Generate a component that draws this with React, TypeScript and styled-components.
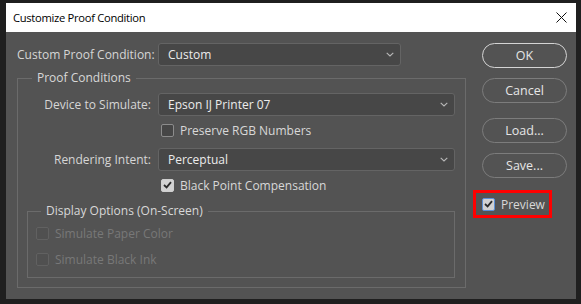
import React from "react";
import styled, { createGlobalStyle } from "styled-components";

const GlobalStyle = createGlobalStyle`
  html, body {
    margin: 0;
    padding: 0;
    background: #1f1f1f;
  }
  body {
    font-family: "Open Sans", "Noto Sans", sans-serif;
  }
`;

const Window = styled.div`
  width: 581px;
  height: 304px;
  box-sizing: border-box;
  padding: 3px 5px 5px 6px;
  background: #1f1f1f;
  display: flex;
  flex-direction: column;
`;

const TitleBar = styled.div`
  height: 29px;
  flex: none;
  background: #ffffff;
  display: flex;
  align-items: center;
  justify-content: space-between;
  padding: 0 9px 0 7px;
`;

const Title = styled.span`
  font-size: 11.2px;
  letter-spacing: -0.3px;
  color: #000;
`;

const CloseIcon = () => (
  <svg width="11" height="11" viewBox="0 0 11 11">
    <path d="M0.5 0.5 L10.5 10.5 M10.5 0.5 L0.5 10.5" stroke="#111" strokeWidth="1" fill="none" />
  </svg>
);

const Body = styled.div`
  flex: 1;
  background: #535353;
  display: flex;
  padding: 11px 9px 0 11px;
  gap: 16px;
  color: #d6d6d6;
  font-size: 12px;
`;

const Main = styled.div`
  width: 449px;
  display: flex;
  flex-direction: column;
  gap: 4px;
`;

const TopRow = styled.div`
  display: flex;
  align-items: center;
  gap: 7px;
`;

const Label = styled.span<{ $width?: number }>`
  width: ${(p) => p.$width ?? 133}px;
  text-align: right;
  white-space: nowrap;
`;

const SelectBox = styled.div<{ $width?: number }>`
  height: 23px;
  box-sizing: border-box;
  width: ${(p) => (p.$width ? `${p.$width}px` : "auto")};
  border: 1px solid #646464;
  border-radius: 3px;
  background: #474747;
  color: #ececec;
  display: flex;
  align-items: center;
  justify-content: space-between;
  padding: 0 6px 0 9px;
`;

const Chevron = () => (
  <svg width="8" height="5" viewBox="0 0 8 5">
    <path d="M0.7 0.8 L4 4 L7.3 0.8" stroke="#b8b8b8" strokeWidth="1.1" fill="none" />
  </svg>
);

const Select = ({ value, width }: { value: string; width?: number }) => (
  <SelectBox $width={width}>
    <span>{value}</span>
    <Chevron />
  </SelectBox>
);

const Group = styled.fieldset`
  margin: 0;
  padding: 0;
  border: 1px solid #6b6b6b;
  min-width: 0;
`;

const Legend = styled.legend<{ $offset: number }>`
  margin-left: ${(p) => p.$offset}px;
  padding: 0 5px;
  line-height: 16px;
  color: #d8d8d8;
`;

const FormGrid = styled.div`
  display: grid;
  grid-template-columns: 133px 1fr;
  column-gap: 7px;
  align-items: center;
  padding: 7px 10px 9px 0;
`;

const Spacer = styled.div<{ $h: number }>`
  grid-column: 1 / -1;
  height: ${(p) => p.$h}px;
`;

const CheckRow = styled.label<{ $disabled?: boolean; $indent?: number }>`
  display: flex;
  align-items: center;
  gap: 6px;
  height: 14px;
  margin-left: ${(p) => p.$indent ?? 0}px;
  color: ${(p) => (p.$disabled ? "#787878" : "#d8d8d8")};
  white-space: nowrap;
`;

const Box = styled.span<{ $checked?: boolean; $focus?: boolean; $disabled?: boolean }>`
  width: 13px;
  height: 13px;
  box-sizing: border-box;
  border-radius: 2px;
  flex: none;
  display: flex;
  align-items: center;
  justify-content: center;
  border: 1px solid
    ${(p) => (p.$disabled ? "#616161" : p.$focus ? "#5b8fd6" : p.$checked ? "#cfcfcf" : "#8c8c8c")};
  background: ${(p) => (p.$disabled ? "#505050" : p.$checked ? "#d2d2d2" : "#464646")};
`;

const CheckMark = () => (
  <svg width="9" height="8" viewBox="0 0 9 8">
    <path d="M1 4 L3.6 6.4 L8 1.2" stroke="#2a2a2a" strokeWidth="1.8" fill="none" />
  </svg>
);

const Checkbox = ({
  label,
  checked,
  disabled,
  focus,
  indent,
}: {
  label: string;
  checked?: boolean;
  disabled?: boolean;
  focus?: boolean;
  indent?: number;
}) => (
  <CheckRow $disabled={disabled} $indent={indent}>
    <Box $checked={checked} $disabled={disabled} $focus={focus}>
      {checked && <CheckMark />}
    </Box>
    {label}
  </CheckRow>
);

const DisplayGroup = styled(Group)`
  grid-column: 1 / -1;
  margin-left: 9px;
`;

const DisplayList = styled.div`
  display: flex;
  flex-direction: column;
  gap: 12px;
  padding: 7px 0 11px 8px;
`;

const Side = styled.div`
  width: 85px;
  display: flex;
  flex-direction: column;
`;

const Button = styled.div<{ $primary?: boolean; $gap?: number }>`
  height: 25px;
  box-sizing: border-box;
  margin-top: ${(p) => p.$gap ?? 0}px;
  border: ${(p) => (p.$primary ? "1.5px solid #d4d4d4" : "1px solid #7c7c7c")};
  border-radius: 13px;
  display: flex;
  align-items: center;
  justify-content: center;
  color: #e6e6e6;
  font-size: 12.5px;
`;

const Highlight = styled.div`
  margin: 12px 0 0 -9px;
  width: 79px;
  height: 28px;
  box-sizing: border-box;
  border: 3px solid #ff0000;
  display: flex;
  align-items: center;
  padding-left: 6px;
`;

export default function App() {
  return (
    <>
      <GlobalStyle />
      <Window>
        <TitleBar>
          <Title>Customize Proof Condition</Title>
          <CloseIcon />
        </TitleBar>
        <Body>
          <Main>
            <TopRow>
              <Label $width={134}>Custom Proof Condition:</Label>
              <Select value="Custom" width={243} />
            </TopRow>
            <Group>
              <Legend $offset={14}>Proof Conditions</Legend>
              <FormGrid>
                <Label>Device to Simulate:</Label>
                <Select value="Epson IJ Printer 07" />
                <Spacer $h={7} />
                <span />
                <Checkbox label="Preserve RGB Numbers" indent={3} />
                <Spacer $h={11} />
                <Label>Rendering Intent:</Label>
                <Select value="Perceptual" />
                <Spacer $h={7} />
                <span />
                <Checkbox label="Black Point Compensation" checked indent={3} />
                <Spacer $h={11} />
                <DisplayGroup>
                  <Legend $offset={13}>Display Options (On-Screen)</Legend>
                  <DisplayList>
                    <Checkbox label="Simulate Paper Color" disabled />
                    <Checkbox label="Simulate Black Ink" disabled />
                  </DisplayList>
                </DisplayGroup>
              </FormGrid>
            </Group>
          </Main>
          <Side>
            <Button $primary>OK</Button>
            <Button $gap={10}>Cancel</Button>
            <Button $gap={15}>Load...</Button>
            <Button $gap={10}>Save...</Button>
            <Highlight>
              <Checkbox label="Preview" checked focus />
            </Highlight>
          </Side>
        </Body>
      </Window>
    </>
  );
}
